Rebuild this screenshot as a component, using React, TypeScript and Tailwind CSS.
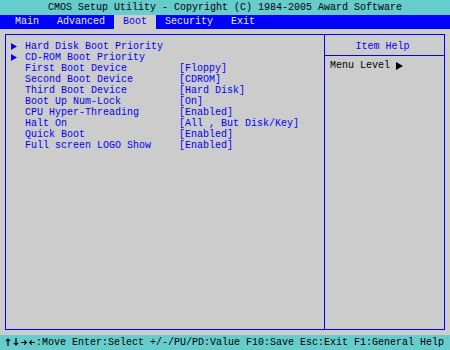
const mono = "font-['Liberation_Mono','DejaVu_Sans_Mono',monospace]";

const tabs = ["Main", "Advanced", "Boot", "Security", "Exit"];

const rows: { label: string; value?: string; sub?: boolean }[] = [
  { label: "Hard Disk Boot Priority", sub: true },
  { label: "CD-ROM Boot Priority", sub: true },
  { label: "First Boot Device", value: "[Floppy]" },
  { label: "Second Boot Device", value: "[CDROM]" },
  { label: "Third Boot Device", value: "[Hard Disk]" },
  { label: "Boot Up Num-Lock", value: "[On]" },
  { label: "CPU Hyper-Threading", value: "[Enabled]" },
  { label: "Halt On", value: "[All , But Disk/Key]" },
  { label: "Quick Boot", value: "[Enabled]" },
  { label: "Full screen LOGO Show", value: "[Enabled]" },
];

const arrowPaths: Record<string, string> = {
  up: "M3 1 V8 M0.8 3.2 L3 1 L5.2 3.2",
  down: "M3 0 V7 M0.8 4.8 L3 7 L5.2 4.8",
  right: "M0 4.5 H5.5 M3.3 2.3 L5.5 4.5 L3.3 6.7",
  left: "M0.5 4.5 H6 M2.7 2.3 L0.5 4.5 L2.7 6.7",
};

function Tri({ w, h, color }: { w: number; h: number; color: string }) {
  return (
    <svg width={w} height={h} viewBox={`0 0 ${w} ${h}`} className="block">
      <polygon points={`0,0 ${w},${h / 2} 0,${h}`} fill={color} />
    </svg>
  );
}

function Arrow({ dir }: { dir: string }) {
  return (
    <svg width={6} height={9} viewBox="0 0 6 9" className="block">
      <path d={arrowPaths[dir]} stroke="#000" strokeWidth={1.2} fill="none" />
    </svg>
  );
}

export default function App() {
  return (
    <div className={`flex h-[350px] w-[450px] flex-col bg-[#cccccc] text-[10px] ${mono}`}>
      <div className="h-[15px] bg-[#66cccc] text-center leading-[15px] text-black whitespace-pre">
        CMOS Setup Utility - Copyright (C) 1984-2005 Award Software
      </div>
      <div className="flex h-[14px] bg-[#0000ff] pl-[6px] leading-[14px]">
        {tabs.map((t) => (
          <span
            key={t}
            className={`px-[9px] ${t === "Boot" ? "bg-[#cccccc] text-[#0000ff]" : "text-[#e8e8e8]"}`}
          >
            {t}
          </span>
        ))}
      </div>

      <div className="flex-1 px-[5px] pt-[5px] pb-[5px]">
        <div className="flex h-full border border-[#0000ff]">
          <div className="w-[319px] border-r border-[#0000ff] pt-[6px]">
            {rows.map((r) => (
              <div key={r.label} className="flex h-[11px] items-center leading-[11px] text-[#0000ff] whitespace-pre">
                <span className="flex w-[19px] pl-[5px]">
                  {r.sub && <Tri w={6} h={7} color="#0000ff" />}
                </span>
                <span className="w-[154px]">{r.label}</span>
                <span>{r.value}</span>
              </div>
            ))}
          </div>
          <div className="flex-1">
            <div className="h-[21px] border-b border-[#0000ff] pt-[6px] pr-[4px] text-center leading-[11px] text-[#0000ff]">
              Item Help
            </div>
            <div className="flex items-center pt-[4px] pl-[5px] leading-[11px] text-black">
              <span>Menu Level</span>
              <span className="ml-[6px]">
                <Tri w={7} h={8} color="#000000" />
              </span>
            </div>
          </div>
        </div>
      </div>

      <div className="flex h-[15px] items-center bg-[#66cccc] pl-[5px] leading-[15px] text-black whitespace-pre">
        <span className="flex w-[31px] items-center gap-[2px]">
          <Arrow dir="up" />
          <Arrow dir="down" />
          <Arrow dir="right" />
          <Arrow dir="left" />
        </span>
        <span>:Move Enter:Select +/-/PU/PD:Value F10:Save Esc:Exit F1:General Help</span>
      </div>
    </div>
  );
}
